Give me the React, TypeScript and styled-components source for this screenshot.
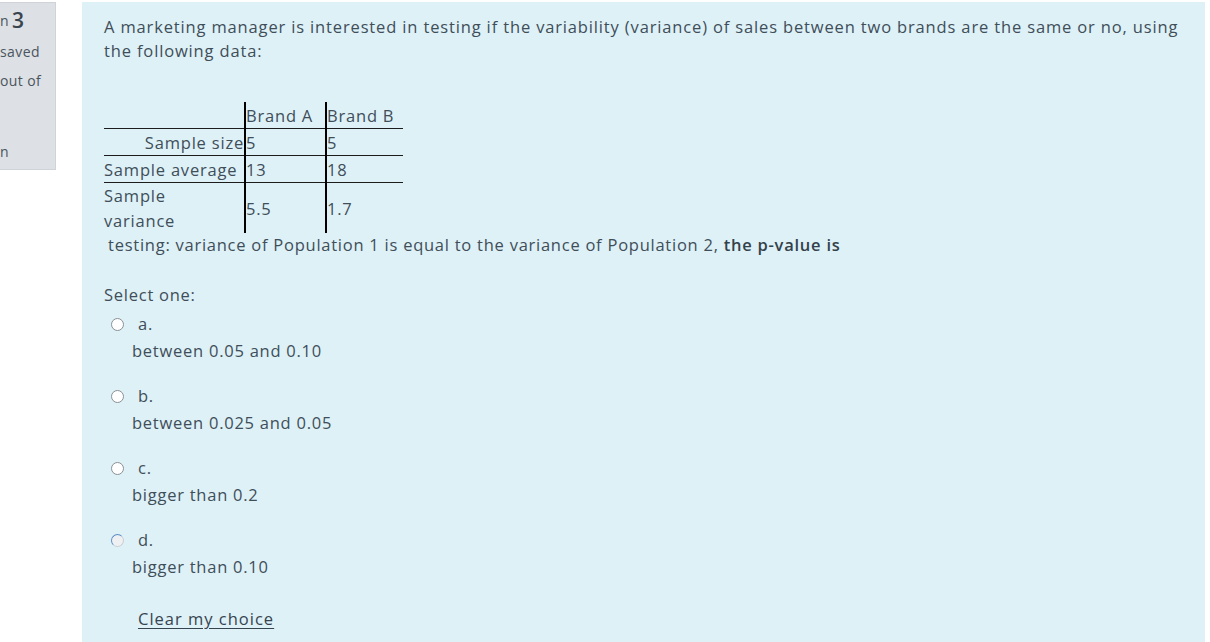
import styled, { createGlobalStyle } from "styled-components";

const GlobalStyle = createGlobalStyle`
  body {
    margin: 0;
    background: #ffffff;
    font-family: "Open Sans", "Liberation Sans", sans-serif;
    color: #404e59;
  }
`;

const Page = styled.div`
  display: flex;
  align-items: flex-start;
  gap: 26px;
  padding-top: 2px;
  padding-right: 5px;
`;

const InfoBox = styled.aside`
  width: 55px;
  height: 166px;
  flex-shrink: 0;
  background: #dde0e4;
  border: 1px solid #cfd3d8;
  border-left: none;
  overflow: hidden;
  font-size: 14px;
  letter-spacing: 0.4px;
  color: #4a5560;
`;

const InfoTitle = styled.div`
  height: 34px;
  display: flex;
  align-items: center;
  gap: 3px;
  font-size: 14px;
  white-space: nowrap;
`;

const QNumber = styled.span`
  font-size: 21px;
  font-weight: 600;
  color: #39444e;
`;

const InfoLine = styled.div<{ $gap?: number }>`
  margin-top: ${(p) => p.$gap ?? 0}px;
  line-height: 18px;
  white-space: nowrap;
`;

const Content = styled.main`
  flex: 1;
  min-height: 660px;
  background: #def1f7;
  padding: 13px 22px 0 22px;
  font-size: 16.5px;
  line-height: 24px;
  letter-spacing: 0.75px;
`;

const Paragraph = styled.p`
  margin: 0;
  letter-spacing: 0.85px;
`;

const DataTable = styled.table`
  margin-top: 39px;
  border-collapse: collapse;
  font-size: 16.5px;
  line-height: 25px;
`;

const Cell = styled.td<{ $align?: string; $first?: boolean; $top?: boolean; $w?: number }>`
  padding: 0;
  vertical-align: middle;
  text-align: ${(p) => p.$align ?? "left"};
  width: ${(p) => (p.$w ? `${p.$w}px` : "auto")};
  border-left: ${(p) => (p.$first ? "none" : "2px solid #000")};
  border-top: ${(p) => (p.$top ? "1px solid #1c1c1c" : "none")};
  height: 26px;
  letter-spacing: 0.8px;
  white-space: nowrap;
`;

const Statement = styled.p`
  margin: 0;
  padding-left: 4px;
`;

const Strong = styled.strong`
  font-weight: 600;
  color: #33414b;
`;

const Prompt = styled.div`
  margin-top: 26px;
`;

const Options = styled.div`
  margin-top: 5px;
  display: flex;
  flex-direction: column;
  gap: 21px;
`;

const Option = styled.div`
  display: flex;
  flex-direction: column;
  gap: 3px;
`;

const OptionHead = styled.label`
  display: flex;
  align-items: center;
  gap: 14px;
  padding-left: 7px;
`;

const Radio = styled.span<{ $focus?: boolean }>`
  box-sizing: border-box;
  width: 13px;
  height: 13px;
  border-radius: 50%;
  background: ${(p) => (p.$focus ? "#eef0f2" : "#ffffff")};
  border: 1.5px solid #8a9096;
  border-color: ${(p) => (p.$focus ? "#5b8fc7 #c9ced3 #c9ced3 #5b8fc7" : "#8a9096")};
  flex-shrink: 0;
`;

const Answer = styled.div`
  padding-left: 28px;
`;

const ClearLink = styled.a`
  display: block;
  margin-top: 28px;
  margin-left: 34px;
  color: #36444f;
  letter-spacing: 1px;
  text-decoration: underline;
  text-underline-offset: 3px;
  cursor: pointer;
`;

const options = [
  { letter: "a.", text: "between 0.05 and 0.10" },
  { letter: "b.", text: "between 0.025 and 0.05" },
  { letter: "c.", text: "bigger than 0.2" },
  { letter: "d.", text: "bigger than 0.10", focus: true },
];

export default function App() {
  return (
    <>
      <GlobalStyle />
      <Page>
        <InfoBox>
          <InfoTitle>
            <span>n</span>
            <QNumber>3</QNumber>
          </InfoTitle>
          <InfoLine $gap={6}>saved</InfoLine>
          <InfoLine $gap={11}>out of</InfoLine>
          <InfoLine $gap={53}>n</InfoLine>
        </InfoBox>
        <Content>
          <Paragraph>
            A marketing manager is interested in testing if the variability (variance) of sales between two
            brands are the same or no, using the following data:
          </Paragraph>
          <DataTable>
            <tbody>
              <tr>
                <Cell $first $w={140}></Cell>
                <Cell $w={79}>Brand A</Cell>
                <Cell $w={76}>Brand B</Cell>
              </tr>
              <tr>
                <Cell $first $top $align="right">Sample size</Cell>
                <Cell $top>5</Cell>
                <Cell $top>5</Cell>
              </tr>
              <tr>
                <Cell $first $top>Sample average</Cell>
                <Cell $top>13</Cell>
                <Cell $top>18</Cell>
              </tr>
              <tr>
                <Cell $first $top>
                  Sample
                  <br />
                  variance
                </Cell>
                <Cell $top>5.5</Cell>
                <Cell $top>1.7</Cell>
              </tr>
            </tbody>
          </DataTable>
          <Statement>
            testing: variance of Population 1 is equal to the variance of Population 2, <Strong>the p-value is</Strong>
          </Statement>
          <Prompt>Select one:</Prompt>
          <Options>
            {options.map((o) => (
              <Option key={o.letter}>
                <OptionHead>
                  <Radio $focus={o.focus} />
                  {o.letter}
                </OptionHead>
                <Answer>{o.text}</Answer>
              </Option>
            ))}
          </Options>
          <ClearLink>Clear my choice</ClearLink>
        </Content>
      </Page>
    </>
  );
}
